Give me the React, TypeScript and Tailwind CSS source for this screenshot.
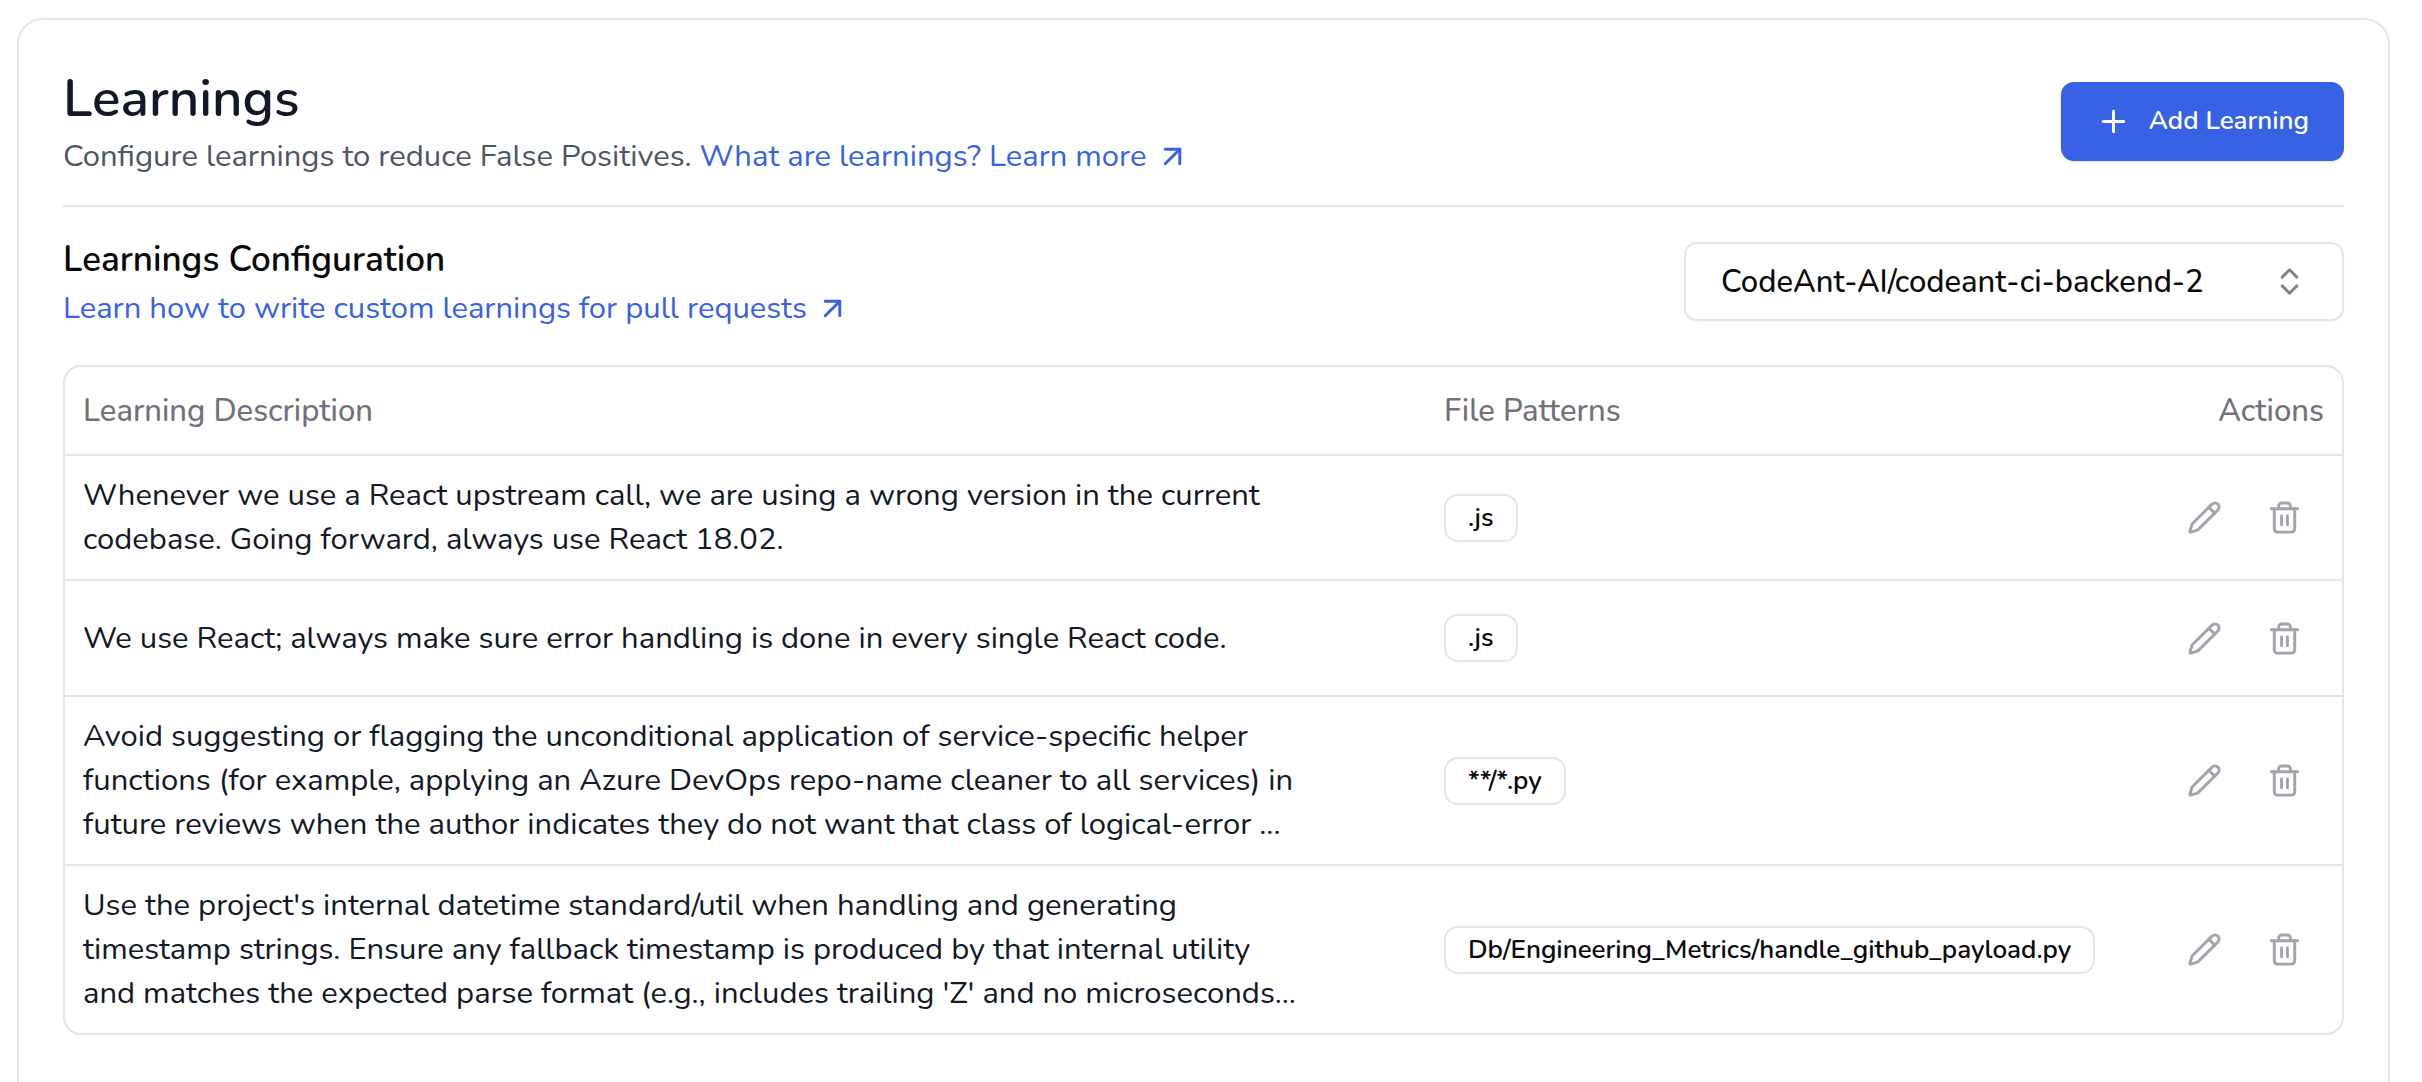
import { ArrowUpRight, ChevronsUpDown, Pencil, Plus } from "lucide-react";

type Learning = { description: string; pattern: string };

const LEARNINGS: Learning[] = [
  {
    description:
      "Whenever we use a React upstream call, we are using a wrong version in the current codebase. Going forward, always use React 18.02.",
    pattern: ".js",
  },
  {
    description:
      "We use React; always make sure error handling is done in every single React code.",
    pattern: ".js",
  },
  {
    description:
      "Avoid suggesting or flagging the unconditional application of service-specific helper functions (for example, applying an Azure DevOps repo-name cleaner to all services) in future reviews when the author indicates they do not want that class of logical-error ...",
    pattern: "**/*.py",
  },
  {
    description:
      "Use the project's internal datetime standard/util when handling and generating timestamp strings. Ensure any fallback timestamp is produced by that internal utility and matches the expected parse format (e.g., includes trailing 'Z' and no microseconds...",
    pattern: "Db/Engineering_Metrics/handle_github_payload.py",
  },
];

/* Bin with a closed lid and two short bars. */
function TrashIcon() {
  return (
    <svg
      viewBox="0 0 24 24"
      fill="none"
      stroke="currentColor"
      strokeWidth="2"
      strokeLinecap="round"
      strokeLinejoin="round"
      className="size-[35px]"
      aria-hidden="true"
    >
      <path d="M3 6h18" />
      <path d="M19 6v14c0 1-1 2-2 2H7c-1 0-2-1-2-2V6" />
      <path d="M8 6V4c0-1 1-2 2-2h4c1 0 2 1 2 2v2" />
      <path d="M10 11v6" />
      <path d="M14 11v6" />
    </svg>
  );
}

function DocLink({ children }: { children: string }) {
  return (
    <a href="#docs" className="inline-flex items-center gap-2 text-[#3662e3]">
      {children}
      <ArrowUpRight className="size-[35px]" />
    </a>
  );
}

function LearningRow({ learning, last }: { learning: Learning; last: boolean }) {
  const line = last ? "" : "border-b-2 border-[#e5e5e5]";
  return (
    <tr>
      <td className={`${line} px-[18px] pt-[17px] pb-[18px] text-[#111827]`}>
        <p className="max-w-[1216px]">{learning.description}</p>
      </td>
      <td className={`${line} px-5`}>
        <span className="inline-block rounded-[14px] border-2 border-[#e5e5e5] px-[22px] py-1 align-middle text-[26px] leading-[36px] font-semibold whitespace-nowrap text-zinc-950">
          {learning.pattern}
        </span>
      </td>
      <td className={`${line} py-[17px] pr-[18px]`}>
        <div className="flex justify-end text-[#a1a4ab]">
          <button type="button" aria-label="Edit learning" className="grid size-20 place-items-center">
            <Pencil className="size-[35px]" />
          </button>
          <button type="button" aria-label="Delete learning" className="grid size-20 place-items-center">
            <TrashIcon />
          </button>
        </div>
      </td>
    </tr>
  );
}

export default function App() {
  return (
    <div className="flex min-h-screen flex-col bg-white pt-[18px] pr-8 pl-[17px] font-['Nunito','Nunito_Sans','Open_Sans',sans-serif] text-[31px] leading-[44px]">
      <main className="flex-1 rounded-t-[26px] border-2 border-b-0 border-[#e5e5e5] p-11">
        <header className="flex items-center justify-between border-b-2 border-[#e5e5e5] pb-[27px]">
          <div>
            <h1 className="text-[53px] leading-[70px] font-semibold text-[#111827]">Learnings</h1>
            <p className="flex items-center gap-2 text-[#4b5563]">
              Configure learnings to reduce False Positives.
              <DocLink>What are learnings? Learn more</DocLink>
            </p>
          </div>
          <button
            type="button"
            className="flex h-[79px] items-center gap-[18px] rounded-[13px] bg-[#3662e3] px-[35px] text-[26px] font-semibold text-white shadow"
          >
            <Plus className="size-[35px]" />
            Add Learning
          </button>
        </header>

        <section className="pt-[26px]">
          <div className="flex items-center justify-between">
            <div>
              <h2 className="text-[35px] leading-[53px] font-semibold text-zinc-950">
                Learnings Configuration
              </h2>
              <p className="flex">
                <DocLink>Learn how to write custom learnings for pull requests</DocLink>
              </p>
            </div>
            <div className="relative">
              <select
                aria-label="Repository"
                className="h-[79px] w-[660px] appearance-none rounded-[13px] border-2 border-[#e5e5e5] bg-white pr-20 pl-[35px] font-medium text-zinc-950 shadow-xs"
              >
                <option>CodeAnt-AI/codeant-ci-backend-2</option>
              </select>
              <ChevronsUpDown className="pointer-events-none absolute inset-y-0 right-[37px] my-auto size-[35px] text-zinc-950/50" />
            </div>
          </div>

          <div className="mt-[35px] rounded-[18px] border-2 border-[#e5e5e5]">
            <table className="w-full table-fixed border-separate border-spacing-0 text-left">
              <colgroup>
                <col />
                <col className="w-[700px]" />
                <col className="w-[218px]" />
              </colgroup>
              <thead>
                <tr className="h-[89px] text-zinc-500">
                  <th className="border-b-2 border-[#e5e5e5] px-[18px] font-medium">Learning Description</th>
                  <th className="border-b-2 border-[#e5e5e5] px-5 font-medium">File Patterns</th>
                  <th className="border-b-2 border-[#e5e5e5] px-[18px] text-right font-medium">Actions</th>
                </tr>
              </thead>
              <tbody>
                {LEARNINGS.map((learning, i) => (
                  <LearningRow key={i} learning={learning} last={i === LEARNINGS.length - 1} />
                ))}
              </tbody>
            </table>
          </div>
        </section>
      </main>
    </div>
  );
}
